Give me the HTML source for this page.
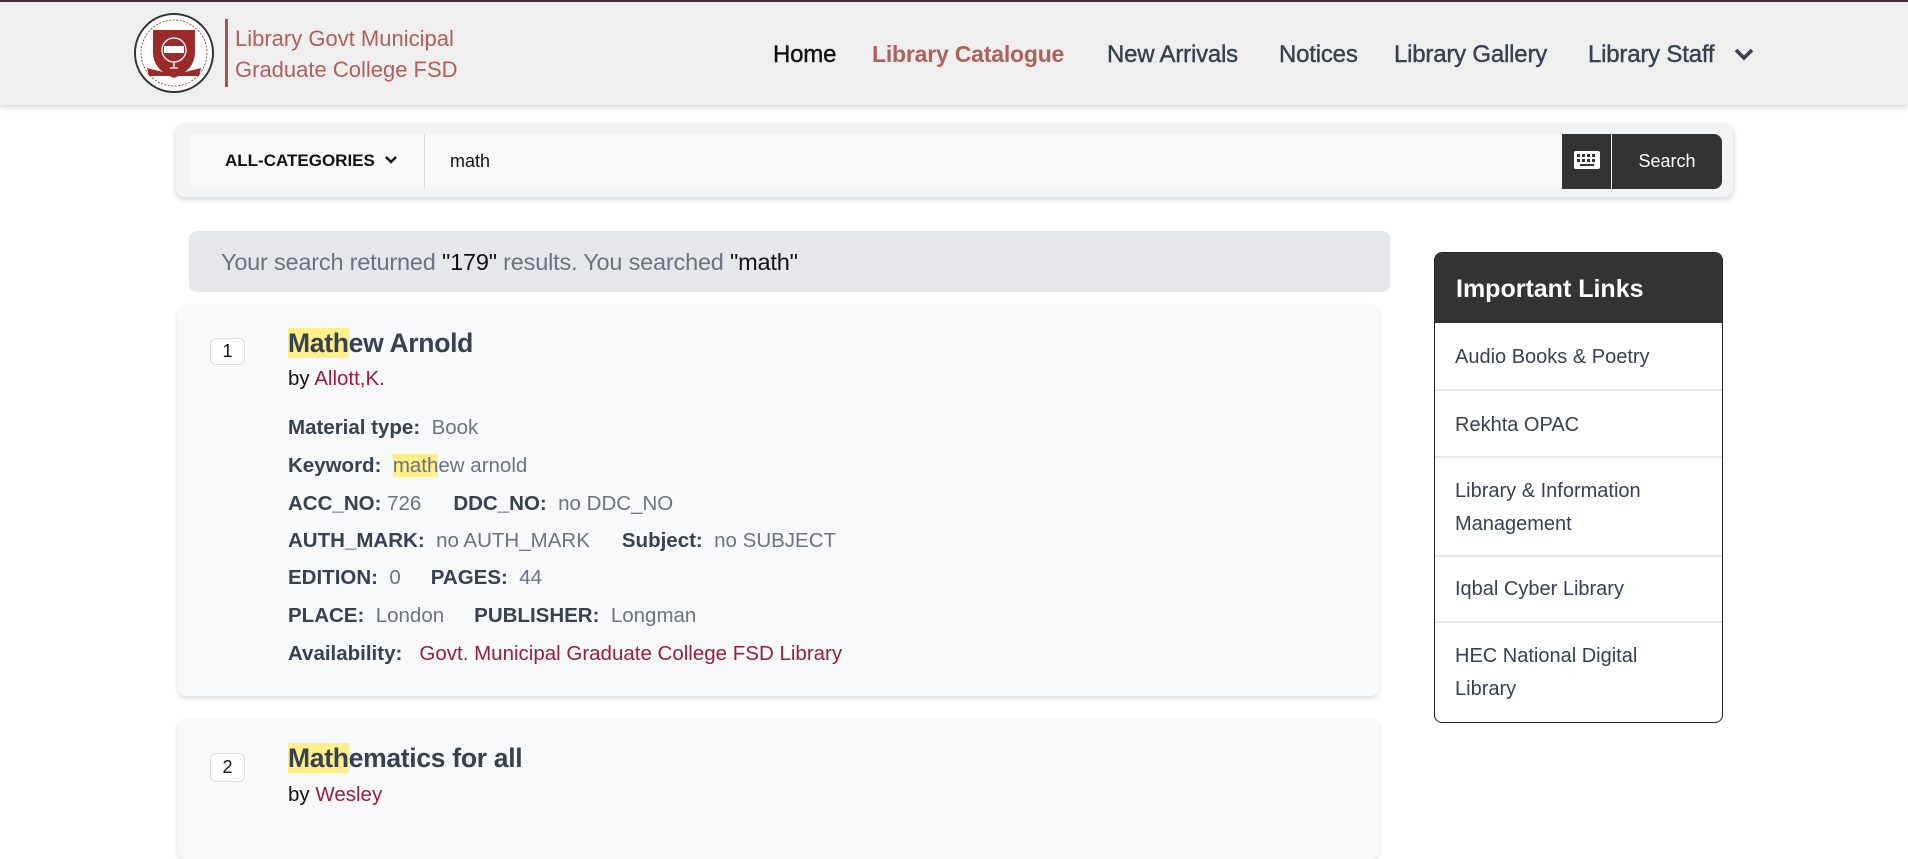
<!DOCTYPE html>
<html><head><meta charset="utf-8"><style>
*{margin:0;padding:0;box-sizing:border-box}
body{width:1908px;height:835px;overflow:hidden;background:#fff;font-family:"Liberation Sans",sans-serif;position:relative;color:#374151}
.a{position:absolute;white-space:nowrap}
.nav{position:absolute;left:0;top:0;width:1908px;height:105px;background:#efefef;border-top:2px solid #4a2a40;box-shadow:0 2px 6px rgba(0,0,0,.18)}
.ni{position:absolute;top:39px;font-size:24px;color:#374151;letter-spacing:-.2px;-webkit-text-stroke:.4px #374151}
.lbl{font-weight:bold;color:#374151}
.val{color:#6b7280}
.row{position:absolute;left:288px;font-size:20.5px}
.hl{background:#fdf08a}
.li{position:absolute;left:0;width:287px;border-top:2px solid #e5e7eb;padding-left:20px;font-size:20px;color:#374151;line-height:33px}
</style></head><body>
<div class="nav">
 <svg class="a" style="left:133px;top:10px" width="82" height="82" viewBox="0 0 82 82">
  <circle cx="41" cy="41" r="39" fill="#fff" stroke="#333" stroke-width="2"/>
  <circle cx="41" cy="41" r="33" fill="none" stroke="#9b2a2a" stroke-width="0.8" stroke-dasharray="2 1.5"/>
  <path d="M20 18 L62 18 L62 40 Q62 58 41 66 Q20 58 20 40 Z" fill="#9b2a2a"/>
  <circle cx="41" cy="38" r="12" fill="none" stroke="#fff" stroke-width="1.3"/>
  <rect x="31" y="34" width="20" height="7" fill="#fff"/>
  <path d="M41 50 L41 56 M37 56 L45 56" stroke="#fff" stroke-width="1.3"/>
  <path d="M14 56 L30 60 L52 60 L68 56 L66 64 L16 64 Z" fill="#9b2a2a"/>
 </svg>
 <div class="a" style="left:225px;top:17px;width:3px;height:68px;background:#b0504a"></div>
 <div class="a" style="left:235px;top:21px;font-size:22px;line-height:31px;color:#b0605a">Library Govt Municipal<br>Graduate College FSD</div>
 <div class="ni" style="left:773px;color:#111;-webkit-text-stroke:.4px #111">Home</div>
 <div class="ni" style="left:872px;color:#b0605a;font-weight:bold;font-size:23px;-webkit-text-stroke:0">Library Catalogue</div>
 <div class="ni" style="left:1107px">New Arrivals</div>
 <div class="ni" style="left:1279px">Notices</div>
 <div class="ni" style="left:1394px">Library Gallery</div>
 <div class="ni" style="left:1588px">Library Staff</div>
 <svg class="a" style="left:1734px;top:45px" width="20" height="14" viewBox="0 0 20 14"><path d="M2 3 L10 11 L18 3" fill="none" stroke="#374151" stroke-width="3.5"/></svg>
</div>

<div class="a" style="left:176px;top:124px;width:1557px;height:73px;background:#f3f4f6;border-radius:8px;box-shadow:0 2px 6px rgba(0,0,0,.2)"></div>
<div class="a" style="left:189px;top:134px;width:1533px;height:55px;background:#f8f9fa;border-radius:8px"></div>
<div class="a" style="left:225px;top:151px;font-size:17px;font-weight:bold;color:#111">ALL-CATEGORIES</div>
<svg class="a" style="left:384px;top:155px" width="14" height="10" viewBox="0 0 14 10"><path d="M2 2 L7 7 L12 2" fill="none" stroke="#111" stroke-width="2.5"/></svg>
<div class="a" style="left:424px;top:134px;width:1px;height:55px;background:#ddd"></div>
<div class="a" style="left:450px;top:151px;font-size:18px;color:#111">math</div>
<div class="a" style="left:1562px;top:134px;width:49px;height:55px;background:#333"></div>
<svg class="a" style="left:1573px;top:150px" width="28" height="20" viewBox="0 0 28 20"><rect x="1" y="1" width="26" height="18" rx="2" fill="#fff"/><g fill="#333"><rect x="4" y="4" width="3" height="3"/><rect x="9" y="4" width="3" height="3"/><rect x="14" y="4" width="3" height="3"/><rect x="19" y="4" width="3" height="3"/><rect x="4" y="9" width="3" height="3"/><rect x="9" y="9" width="3" height="3"/><rect x="14" y="9" width="3" height="3"/><rect x="19" y="9" width="3" height="3"/><rect x="7" y="14" width="14" height="2"/></g></svg>
<div class="a" style="left:1612px;top:134px;width:110px;height:55px;background:#333;border-radius:0 8px 8px 0;color:#fff;font-size:18px;text-align:center;line-height:55px">Search</div>

<div class="a" style="left:189px;top:231px;width:1201px;height:61px;background:#e5e7eb;border-radius:8px"></div>
<div class="a" style="left:221px;top:249px;font-size:23.5px;color:#6b7280;letter-spacing:-.2px">Your search returned <span style="color:#111">"179"</span> results. You searched <span style="color:#111">"math"</span></div>

<div class="a" style="left:178px;top:305px;width:1201px;height:391px;background:#f8f9fa;border-radius:8px;box-shadow:0 2px 5px rgba(0,0,0,.15)"></div>
<div class="a" style="left:210px;top:338px;width:35px;height:27px;border:1px solid #ddd;border-radius:6px;background:#fff;font-size:18px;text-align:center;line-height:25px;color:#111">1</div>
<div class="a" style="left:288px;top:328px;font-size:26.5px;font-weight:bold;color:#374151;letter-spacing:-.3px"><span class="hl">Math</span>ew Arnold</div>
<div class="a" style="left:288px;top:367px;font-size:20.5px;color:#111">by <span style="color:#9b1c3c">Allott,K.</span></div>
<div class="row" style="top:416px"><span class="lbl">Material type:</span>&nbsp; <span class="val">Book</span></div>
<div class="row" style="top:454px"><span class="lbl">Keyword:</span>&nbsp; <span class="val"><span class="hl">math</span>ew arnold</span></div>
<div class="row" style="top:492px"><span class="lbl">ACC_NO:</span>&nbsp;<span class="val">726</span><span style="display:inline-block;width:32px"></span><span class="lbl">DDC_NO:</span>&nbsp; <span class="val">no DDC_NO</span></div>
<div class="row" style="top:529px"><span class="lbl">AUTH_MARK:</span>&nbsp; <span class="val">no AUTH_MARK</span><span style="display:inline-block;width:32px"></span><span class="lbl">Subject:</span>&nbsp; <span class="val">no SUBJECT</span></div>
<div class="row" style="top:566px"><span class="lbl">EDITION:</span>&nbsp; <span class="val">0</span><span style="display:inline-block;width:30px"></span><span class="lbl">PAGES:</span>&nbsp; <span class="val">44</span></div>
<div class="row" style="top:604px"><span class="lbl">PLACE:</span>&nbsp; <span class="val">London</span><span style="display:inline-block;width:30px"></span><span class="lbl">PUBLISHER:</span>&nbsp; <span class="val">Longman</span></div>
<div class="row" style="top:642px"><span class="lbl">Availability:</span>&nbsp;&nbsp; <span style="color:#9b1c3c">Govt. Municipal Graduate College FSD Library</span></div>

<div class="a" style="left:178px;top:719px;width:1201px;height:140px;background:#f8f9fa;border-radius:8px;box-shadow:0 2px 5px rgba(0,0,0,.15)"></div>
<div class="a" style="left:210px;top:753px;width:35px;height:29px;border:1px solid #ddd;border-radius:6px;background:#fff;font-size:18px;text-align:center;line-height:27px;color:#111">2</div>
<div class="a" style="left:288px;top:743px;font-size:26.5px;font-weight:bold;color:#374151;letter-spacing:-.3px"><span class="hl">Math</span>ematics for all</div>
<div class="a" style="left:288px;top:783px;font-size:20.5px;color:#111">by <span style="color:#9b1c3c">Wesley</span></div>

<div class="a" style="left:1434px;top:252px;width:289px;height:471px;border:1px solid #222;border-radius:8px;overflow:hidden;background:#fff">
 <div style="position:absolute;left:0;top:0;width:289px;height:70px;background:#333;color:#fff;font-size:25px;font-weight:bold;padding:22px 0 0 21px">Important Links</div>
 <div class="li" style="top:70px;border-top:none;padding-top:18px">Audio Books &amp; Poetry</div>
 <div class="li" style="top:136px;padding-top:18px">Rekhta OPAC</div>
 <div class="li" style="top:203px;padding-top:17px;line-height:33px">Library &amp; Information<br>Management</div>
 <div class="li" style="top:302px;padding-top:16px">Iqbal Cyber Library</div>
 <div class="li" style="top:368px;padding-top:17px">HEC National Digital<br>Library</div>
</div>
</body></html>
